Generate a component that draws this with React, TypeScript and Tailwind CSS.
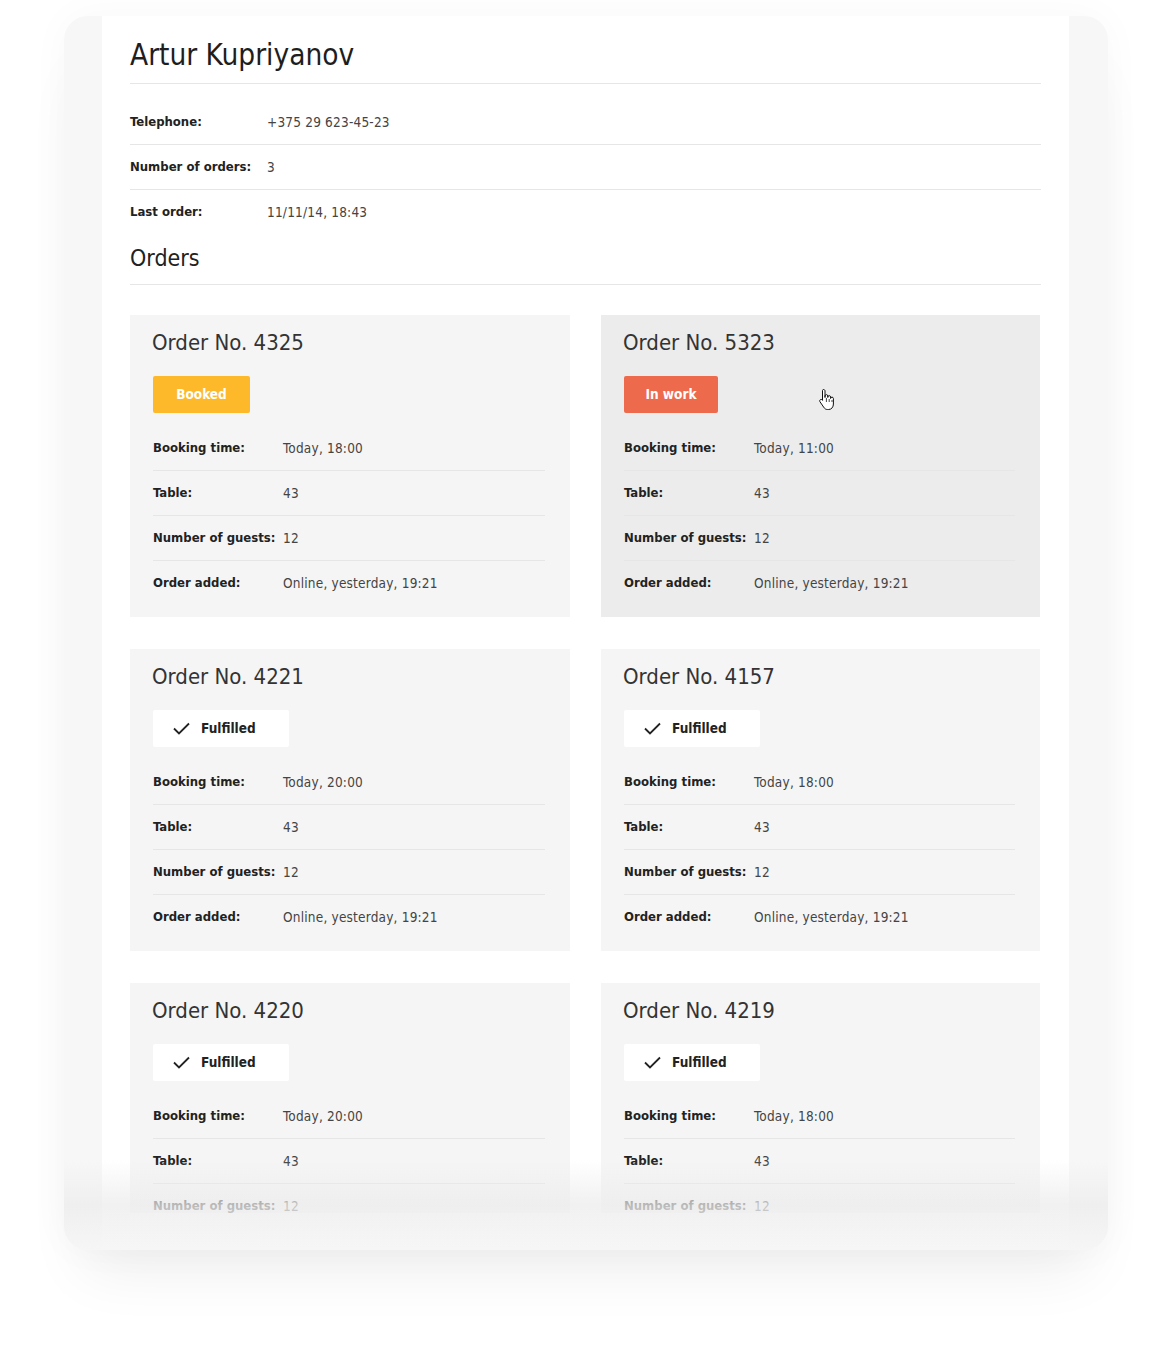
import React from 'react';

type Status = 'booked' | 'work' | 'done';

interface Order {
  no: number;
  status: Status;
  time: string;
  hover?: boolean;
  partial?: boolean;
}

const orders: Order[] = [
  { no: 4325, status: 'booked', time: 'Today, 18:00' },
  { no: 5323, status: 'work', time: 'Today, 11:00', hover: true },
  { no: 4221, status: 'done', time: 'Today, 20:00' },
  { no: 4157, status: 'done', time: 'Today, 18:00' },
  { no: 4220, status: 'done', time: 'Today, 20:00', partial: true },
  { no: 4219, status: 'done', time: 'Today, 18:00', partial: true },
];

const font = "font-['DejaVu_Sans_Condensed','DejaVu_Sans',sans-serif]";

const InfoRow: React.FC<{ label: string; value: string; labelW: string; last?: boolean }> = ({ label, value, labelW, last }) => (
  <div className={`flex items-center leading-4 ${last ? 'h-[44px]' : 'h-[45px] border-b border-[#e6e6e6]'}`}>
    <span className={`${labelW} shrink-0 text-[13px] font-bold text-[#222]`}>{label}</span>
    <span className="text-[13.5px] tracking-[0.2px] text-[#444]">{value}</span>
  </div>
);

const Badge: React.FC<{ status: Status }> = ({ status }) => {
  if (status === 'booked')
    return (
      <div className="h-[37px] w-[97px] rounded-[2px] bg-[#fdb92a] text-white font-bold text-[13.5px] flex items-center justify-center">
        Booked
      </div>
    );
  if (status === 'work')
    return (
      <div className="h-[37px] w-[94px] rounded-[2px] bg-[#ee6a4c] text-white font-bold text-[13.5px] flex items-center justify-center">
        In work
      </div>
    );
  return (
    <div className="h-[37px] w-[136px] rounded-[2px] bg-white text-[#222] font-bold text-[13.5px] flex items-center pl-[20px] gap-[11px]">
      <svg width="17" height="13" viewBox="0 0 17 13" fill="none">
        <path d="M1 6.5l5 5L16 1.5" stroke="#222" strokeWidth="1.8" />
      </svg>
      Fulfilled
    </div>
  );
};

const Cursor = () => (
  <svg className="absolute left-[217px] top-[73px]" width="20" height="24" viewBox="0 0 20 24">
    <path
      d="M5.5 1.5c.9 0 1.5.6 1.5 1.5v6.5V8c0-.8.6-1.4 1.4-1.4s1.4.6 1.4 1.4v1.5V9c0-.8.6-1.4 1.4-1.4s1.4.6 1.4 1.4v1.5c0-.8.6-1.4 1.4-1.4s1.4.6 1.4 1.4V16c0 3-1.8 5.5-4.8 5.5H9.5c-1.8 0-2.8-.8-3.8-2.3L2 13.8c-.6-.9-.3-1.8.4-2.2.8-.4 1.5-.1 2 .6l.1.2V3c0-.9.1-1.5 1-1.5z"
      fill="#fff"
      stroke="#111"
      strokeWidth="1"
      strokeLinejoin="round"
    />
    <path d="M8.4 10v4M11.2 11v3M14 12v2" stroke="#111" strokeWidth="0.8" />
  </svg>
);

const OrderCard: React.FC<{ order: Order }> = ({ order }) => (
  <div
    className={`relative overflow-hidden pt-[14px] pl-[22px] pr-[25px] ${order.partial ? 'h-[230px]' : 'h-[302px] pb-[12px]'} ${order.hover ? 'bg-[#ececec]' : 'bg-[#f5f5f5]'}`}
  >
    <h3 className="text-[22px] leading-[28px] text-[#333]">Order No. {order.no}</h3>
    <div className="mt-[19px] pl-[1px]">
      <Badge status={order.status} />
    </div>
    <div className="mt-[13px] pl-[1px]">
      <InfoRow label="Booking time:" value={order.time} labelW="w-[130px]" />
      <InfoRow label="Table:" value="43" labelW="w-[130px]" />
      <InfoRow label="Number of guests:" value="12" labelW="w-[130px]" last={order.partial} />
      {!order.partial && <InfoRow label="Order added:" value="Online, yesterday, 19:21" labelW="w-[130px]" last />}
    </div>
    {order.hover && <Cursor />}
  </div>
);

const App: React.FC = () => {
  return (
    <div className={`min-h-[1366px] bg-white pt-[16px] pl-[64px] ${font}`}>
      <div className="relative w-[1044px] h-[1234px] rounded-[24px] bg-[#f7f7f7] overflow-hidden shadow-[0_40px_60px_-20px_rgba(0,0,0,0.07),0_0_40px_rgba(0,0,0,0.03)]">
        <div className="ml-[38px] w-[967px] h-full bg-white px-[28px]">
          <h1 className="pt-[22px] pb-[11px] text-[29.5px] leading-[34px] text-[#1e1e1e] border-b border-[#e6e6e6]">
            Artur Kupriyanov
          </h1>
          <div className="mt-[16px]">
            <InfoRow label="Telephone:" value="+375 29 623-45-23" labelW="w-[137px]" />
            <InfoRow label="Number of orders:" value="3" labelW="w-[137px]" />
            <InfoRow label="Last order:" value="11/11/14, 18:43" labelW="w-[137px]" last />
          </div>
          <h2 className="mt-[9px] pb-[11px] text-[23px] leading-[30px] text-[#222] border-b border-[#e6e6e6]">Orders</h2>
          <div className="mt-[30px] grid grid-cols-[440px_439px] gap-x-[31px] gap-y-[32px]">
            {orders.map((o) => (
              <OrderCard key={o.no} order={o} />
            ))}
          </div>
        </div>
        {/* bottom fade */}
        <div className="absolute left-0 right-0 bottom-0 h-[90px] bg-gradient-to-b from-[rgba(240,240,240,0)] via-[rgba(236,236,236,0.75)] to-[rgba(246,246,246,0.98)]" />
      </div>
    </div>
  );
};

export default App;
